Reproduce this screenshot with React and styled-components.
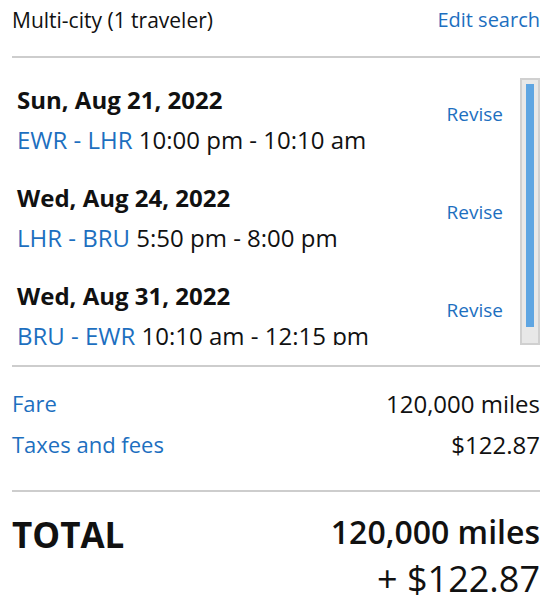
import React from 'react'
import styled, { createGlobalStyle } from 'styled-components'

const GlobalStyle = createGlobalStyle`
  body {
    margin: 0;
    background: #fff;
    font-family: "Open Sans", "Noto Sans", sans-serif;
    color: #111;
  }
`

const Panel = styled.div`
  width: 528px;
  margin: 0 12px;
  padding-top: 6px;
`

const Header = styled.div`
  display: flex;
  justify-content: space-between;
  align-items: center;
  font-size: 21px;
  line-height: 28px;
  padding-bottom: 22px;
  border-bottom: 2px solid #cdcdcd;
`

const Link = styled.a`
  color: #1d6fbf;
  text-decoration: none;
  font-size: ${props => props.size || 20}px;
`

const ScrollArea = styled.div`
  display: flex;
  gap: 17px;
  height: 267px;
  margin-top: 20px;
`

const FlightList = styled.div`
  flex: 1;
  overflow: hidden;
  padding-left: 5px;
  padding-top: 6px;
`

const Flight = styled.div`
  display: flex;
  justify-content: space-between;
  align-items: flex-start;
  height: 98px;
`

const Date = styled.div`
  font-size: 24px;
  font-weight: 700;
  line-height: 32px;
  margin-bottom: 8px;
`

const Route = styled.div`
  font-size: 24px;
  line-height: 32px;
  white-space: nowrap;
`

const Code = styled.span`
  color: #1d6fbf;
`

const ReviseLink = styled(Link)`
  margin-top: 17px;
  line-height: 26px;
`

const Track = styled.div`
  width: 20px;
  background: #e8e8e8;
  border: 2px solid #d0d0d0;
  padding: 4px 4px 16px;
  box-sizing: border-box;
`

const Thumb = styled.div`
  height: 100%;
  background: #5ea5e2;
`

const Fees = styled.div`
  border-top: 2px solid #cdcdcd;
  margin-top: 20px;
  padding: 16px 0 25px;
  border-bottom: 2px solid #cdcdcd;
`

const FeeRow = styled.div`
  display: flex;
  justify-content: space-between;
  align-items: center;
  font-size: 24px;
  line-height: 41px;
`

const Total = styled.div`
  display: flex;
  justify-content: space-between;
  align-items: flex-start;
  padding-top: 20px;
`

const TotalLabel = styled.div`
  font-size: 35px;
  font-weight: 700;
  line-height: 46px;
`

const TotalAmount = styled.div`
  text-align: right;
`

const Miles = styled.div`
  font-size: 32px;
  font-weight: 600;
  line-height: 40px;
`

const Cash = styled.div`
  font-size: 36px;
  line-height: 54px;
`

const flights = [
  { date: 'Sun, Aug 21, 2022', route: 'EWR - LHR', time: '10:00 pm - 10:10 am' },
  { date: 'Wed, Aug 24, 2022', route: 'LHR - BRU', time: '5:50 pm - 8:00 pm' },
  { date: 'Wed, Aug 31, 2022', route: 'BRU - EWR', time: '10:10 am - 12:15 pm' },
]

const App = () => {
  return (
    <Panel>
      <GlobalStyle />
      <Header>
        <span>Multi-city (1 traveler)</span>
        <Link href="#">Edit search</Link>
      </Header>
      <ScrollArea>
        <FlightList>
          {flights.map(f => (
            <Flight key={f.date}>
              <div>
                <Date>{f.date}</Date>
                <Route><Code>{f.route}</Code> {f.time}</Route>
              </div>
              <ReviseLink href="#" size={19}>Revise</ReviseLink>
            </Flight>
          ))}
        </FlightList>
        <Track><Thumb /></Track>
      </ScrollArea>
      <Fees>
        <FeeRow>
          <Link href="#" size={22}>Fare</Link>
          <span>120,000 miles</span>
        </FeeRow>
        <FeeRow>
          <Link href="#" size={22}>Taxes and fees</Link>
          <span>$122.87</span>
        </FeeRow>
      </Fees>
      <Total>
        <TotalLabel>TOTAL</TotalLabel>
        <TotalAmount>
          <Miles>120,000 miles</Miles>
          <Cash>+ $122.87</Cash>
        </TotalAmount>
      </Total>
    </Panel>
  )
}

export default App
